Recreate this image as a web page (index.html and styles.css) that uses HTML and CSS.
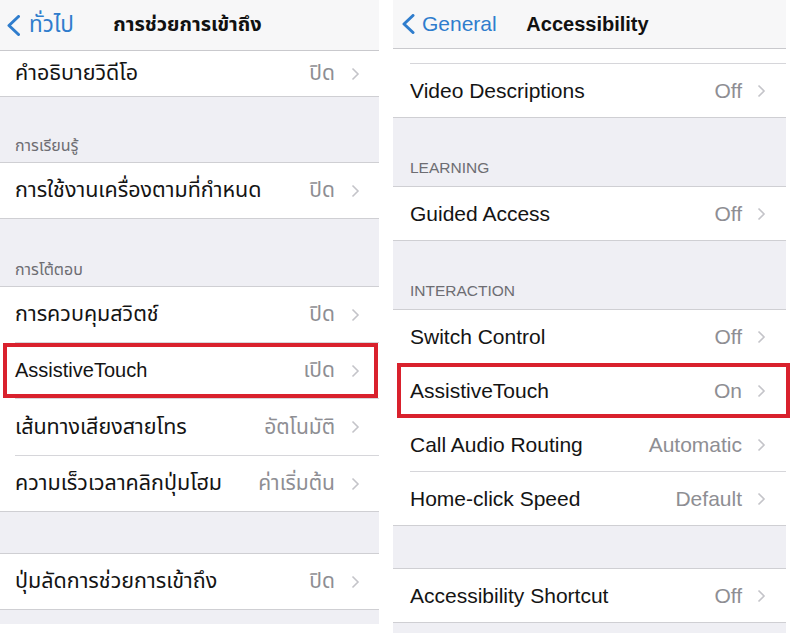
FILE: index.html
```html
<!DOCTYPE html>
<html lang="th">
<head>
<meta charset="utf-8">
<title>Accessibility</title>
<link rel="stylesheet" href="styles.css">
</head>
<body>
<div class="page">
  <section class="phone phone-th">
    <header class="nav">
      <div class="back">
        <svg class="back-icon" width="13" height="21" viewBox="0 0 13 21"><path d="M11.5 1.5 L2 10.5 L11.5 19.5" fill="none" stroke="currentColor" stroke-width="3" stroke-linecap="round" stroke-linejoin="round"/></svg>
        <span>ทั่วไป</span>
      </div>
      <h1 class="title">การช่วยการเข้าถึง</h1>
      <div></div>
    </header>

    <div class="group g-first">
      <div class="row"><span class="label">คำอธิบายวิดีโอ</span><span class="value">ปิด</span><svg class="chev" width="9" height="14" viewBox="0 0 9 14"><path d="M1.5 1.5 L7 7 L1.5 12.5" fill="none" stroke="currentColor" stroke-width="1.6"/></svg></div>
    </div>

    <div class="gap gap-h1"><span class="head">การเรียนรู้</span></div>
    <div class="group">
      <div class="row"><span class="label">การใช้งานเครื่องตามที่กำหนด</span><span class="value">ปิด</span><svg class="chev" width="9" height="14" viewBox="0 0 9 14"><path d="M1.5 1.5 L7 7 L1.5 12.5" fill="none" stroke="currentColor" stroke-width="1.6"/></svg></div>
    </div>

    <div class="gap gap-h2"><span class="head">การโต้ตอบ</span></div>
    <div class="group">
      <div class="row"><span class="label">การควบคุมสวิตช์</span><span class="value">ปิด</span><svg class="chev" width="9" height="14" viewBox="0 0 9 14"><path d="M1.5 1.5 L7 7 L1.5 12.5" fill="none" stroke="currentColor" stroke-width="1.6"/></svg></div>
      <div class="row mark"><span class="label latin">AssistiveTouch</span><span class="value">เปิด</span><svg class="chev" width="9" height="14" viewBox="0 0 9 14"><path d="M1.5 1.5 L7 7 L1.5 12.5" fill="none" stroke="currentColor" stroke-width="1.6"/></svg><span class="highlight"></span></div>
      <div class="row r-tall"><span class="label">เส้นทางเสียงสายโทร</span><span class="value">อัตโนมัติ</span><svg class="chev" width="9" height="14" viewBox="0 0 9 14"><path d="M1.5 1.5 L7 7 L1.5 12.5" fill="none" stroke="currentColor" stroke-width="1.6"/></svg></div>
      <div class="row"><span class="label">ความเร็วเวลาคลิกปุ่มโฮม</span><span class="value">ค่าเริ่มต้น</span><svg class="chev" width="9" height="14" viewBox="0 0 9 14"><path d="M1.5 1.5 L7 7 L1.5 12.5" fill="none" stroke="currentColor" stroke-width="1.6"/></svg></div>
    </div>

    <div class="gap gap-plain"></div>
    <div class="group">
      <div class="row"><span class="label">ปุ่มลัดการช่วยการเข้าถึง</span><span class="value">ปิด</span><svg class="chev" width="9" height="14" viewBox="0 0 9 14"><path d="M1.5 1.5 L7 7 L1.5 12.5" fill="none" stroke="currentColor" stroke-width="1.6"/></svg></div>
    </div>
    <div class="gap gap-end"></div>
  </section>

  <section class="phone phone-en" lang="en">
    <header class="nav">
      <div class="back">
        <svg class="back-icon" width="13" height="20" viewBox="0 0 13 20"><path d="M11 1.5 L2 10 L11 18.5" fill="none" stroke="currentColor" stroke-width="3" stroke-linecap="round" stroke-linejoin="round"/></svg>
        <span>General</span>
      </div>
      <h1 class="title">Accessibility</h1>
      <div></div>
    </header>

    <div class="group g-first">
      <div class="row r-cut"></div>
      <div class="row"><span class="label">Video Descriptions</span><span class="value">Off</span><svg class="chev" width="9" height="14" viewBox="0 0 9 14"><path d="M1.5 1.5 L7 7 L1.5 12.5" fill="none" stroke="currentColor" stroke-width="1.6"/></svg></div>
    </div>

    <div class="gap gap-h1"><span class="head">LEARNING</span></div>
    <div class="group">
      <div class="row"><span class="label">Guided Access</span><span class="value">Off</span><svg class="chev" width="9" height="14" viewBox="0 0 9 14"><path d="M1.5 1.5 L7 7 L1.5 12.5" fill="none" stroke="currentColor" stroke-width="1.6"/></svg></div>
    </div>

    <div class="gap gap-h2"><span class="head">INTERACTION</span></div>
    <div class="group">
      <div class="row"><span class="label">Switch Control</span><span class="value">Off</span><svg class="chev" width="9" height="14" viewBox="0 0 9 14"><path d="M1.5 1.5 L7 7 L1.5 12.5" fill="none" stroke="currentColor" stroke-width="1.6"/></svg></div>
      <div class="row mark"><span class="label">AssistiveTouch</span><span class="value">On</span><svg class="chev" width="9" height="14" viewBox="0 0 9 14"><path d="M1.5 1.5 L7 7 L1.5 12.5" fill="none" stroke="currentColor" stroke-width="1.6"/></svg><span class="highlight"></span></div>
      <div class="row"><span class="label">Call Audio Routing</span><span class="value">Automatic</span><svg class="chev" width="9" height="14" viewBox="0 0 9 14"><path d="M1.5 1.5 L7 7 L1.5 12.5" fill="none" stroke="currentColor" stroke-width="1.6"/></svg></div>
      <div class="row"><span class="label">Home-click Speed</span><span class="value">Default</span><svg class="chev" width="9" height="14" viewBox="0 0 9 14"><path d="M1.5 1.5 L7 7 L1.5 12.5" fill="none" stroke="currentColor" stroke-width="1.6"/></svg></div>
    </div>

    <div class="gap gap-plain"></div>
    <div class="group">
      <div class="row"><span class="label">Accessibility Shortcut</span><span class="value">Off</span><svg class="chev" width="9" height="14" viewBox="0 0 9 14"><path d="M1.5 1.5 L7 7 L1.5 12.5" fill="none" stroke="currentColor" stroke-width="1.6"/></svg></div>
    </div>
    <div class="gap gap-end"></div>
  </section>
</div>
</body>
</html>
```

FILE: styles.css
```css
* { box-sizing: border-box; }

html, body {
  margin: 0;
  padding: 0;
  background: #ffffff;
}

body {
  width: 795px;
  height: 638px;
  overflow: hidden;
  font-family: "Liberation Sans", "Noto Sans", "Noto Sans Thai", "DejaVu Sans", sans-serif;
  color: #141414;
}

.page {
  display: flex;
  gap: 14px;
  align-items: flex-start;
}

.phone {
  display: flex;
  flex-direction: column;
}

.phone-th { flex: 0 0 379px; }
.phone-en { flex: 0 0 393px; }

/* nav bar */
.nav {
  display: grid;
  grid-template-columns: 1fr auto 1fr;
  align-items: center;
  background: #f7f7f8;
  border-bottom: 1px solid #c9c9cd;
}

.phone-th .nav { height: 51px; padding-left: 7px; padding-right: 11px; }
.phone-en .nav { height: 49px; padding-left: 9px; padding-right: 13px; }

.back {
  display: flex;
  align-items: center;
  color: #2f7dcd;
}

.phone-th .back span { margin-left: 9px; font-size: 22.5px; }
.phone-en .back span { margin-left: 7px; font-size: 21px; }

.title {
  margin: 0;
  font-weight: bold;
  color: #111;
  font-size: 20px;
}

/* groups */
.group {
  background: #ffffff;
  border-top: 1px solid #cfcfd3;
  border-bottom: 1px solid #cfcfd3;
}

.g-first { border-top: 0; }

.phone-th .group { padding-left: 15px; }
.phone-en .group { padding-left: 17px; }

.row {
  display: flex;
  align-items: center;
  box-sizing: content-box;
}

.row + .row { border-top: 1px solid #d6d6da; }

.phone-th .row { height: 55px; padding-right: 19px; font-size: 21.5px; }
.phone-th .r-tall { height: 56px; }
.phone-th .g-first .row { height: 45px; }

.phone-en .row { height: 53px; padding-right: 20px; font-size: 21px; }
.phone-en .r-cut { height: 14px; }

.label {
  flex: 1;
  white-space: nowrap;
}

.label.latin { font-size: 20px; }

.value {
  color: #8e8e93;
  white-space: nowrap;
}

.phone-th .value { font-size: 21px; }

.chev {
  color: #c4c4c9;
  margin-left: 16px;
  flex: 0 0 auto;
}

.phone-en .chev { margin-left: 15px; }

/* red highlight annotation */
.mark { position: relative; }

.highlight {
  position: absolute;
  border: 4px solid #d9212d;
  pointer-events: none;
}

.phone-th .highlight { left: -12px; right: 1px; top: 0; bottom: 0; }
.phone-en .highlight { left: -13px; right: -4px; top: -1px; bottom: -1px; }

/* gray gaps & headers */
.gap {
  background: #efeff4;
  display: flex;
  align-items: flex-end;
}

.phone-th .gap { padding-left: 15px; }
.phone-en .gap { padding-left: 17px; }

.head {
  color: #6d6d72;
  line-height: 18px;
}

.phone-th .head { font-size: 16px; }
.phone-en .head { font-size: 15.5px; }

.phone-th .gap-h1 { height: 65px; padding-bottom: 7px; }
.phone-th .gap-h2 { height: 67px; padding-bottom: 7px; }
.phone-th .gap-plain { height: 41px; }
.phone-th .gap-end { height: 14px; }

.phone-en .gap-h1 { height: 68px; padding-bottom: 9px; }
.phone-en .gap-h2 { height: 68px; padding-bottom: 9px; }
.phone-en .gap-plain { height: 42px; }
.phone-en .gap-end { height: 10px; }
```
